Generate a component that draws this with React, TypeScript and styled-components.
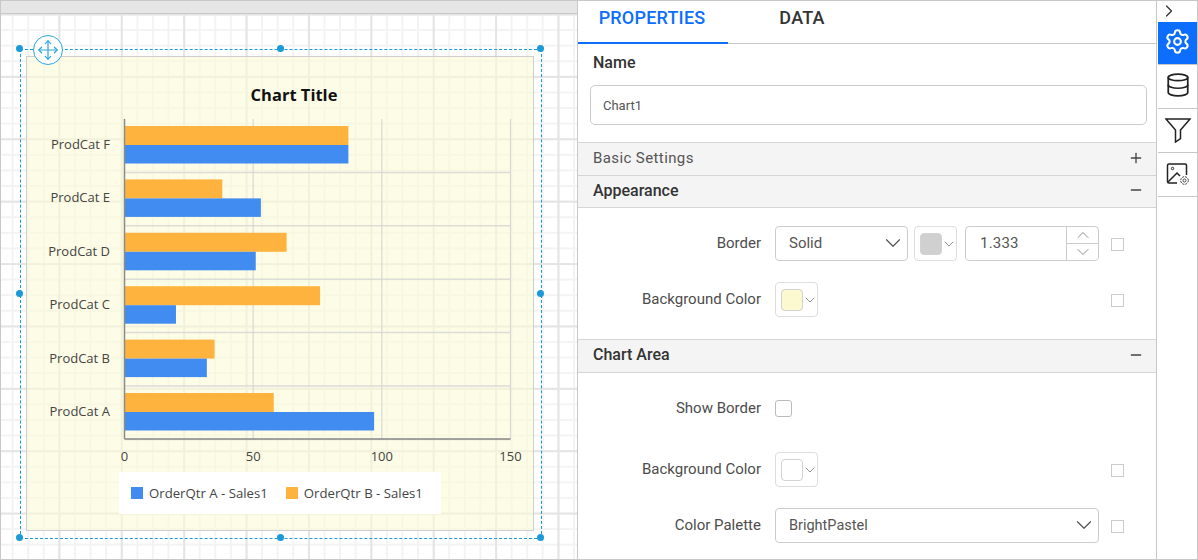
import { createGlobalStyle } from "styled-components";
import styled from "styled-components";
import { ChevronDown, ChevronRight, ChevronUp, Database, Minus, Move, Plus, Settings } from "lucide-react";

const GlobalStyle = createGlobalStyle`
  html, body {
    margin: 0;
    padding: 0;
    background: #fff;
    overflow: hidden;
  }
  * {
    box-sizing: border-box;
  }
`;

const Page = styled.div`
  width: 1198px;
  height: 560px;
  display: flex;
  border: 1px solid #c8c8c8;
  font-family: Roboto, "Liberation Sans", sans-serif;
  color: #333;
  overflow: hidden;
`;

const Designer = styled.div`
  width: 577px;
  flex: none;
  display: flex;
  flex-direction: column;
  border-right: 1px solid #c8c8c8;
`;

const Ruler = styled.div`
  height: 13px;
  flex: none;
  background: #e6e6e6;
  border-bottom: 1px solid #c8c8c8;
`;

const Canvas = styled.div`
  position: relative;
  flex: 1;
  background-color: #fff;
  background-image:
    linear-gradient(to right, #e4e4e4 2px, transparent 2px),
    linear-gradient(to bottom, #e4e4e4 2px, transparent 2px),
    linear-gradient(to right, #f3f3f3 1.5px, transparent 1.5px),
    linear-gradient(to bottom, #f3f3f3 1.5px, transparent 1.5px);
  background-size: 62.4px 62.4px, 62.4px 62.4px, 15.6px 15.6px, 15.6px 15.6px;
  background-position: -5px 0px, 0 -0.5px, -5px 0, 0 -0.5px;
`;

const ChartBox = styled.div`
  position: absolute;
  left: 25px;
  top: 42px;
  width: 508px;
  height: 475px;
  background: rgba(252, 250, 214, 0.6);
  border: 1px solid #cfcfcf;
`;

const ChartSvg = styled.svg`
  position: absolute;
  left: -1px;
  top: -1px;
  width: 508px;
  height: 475px;
  font-family: "Open Sans", "Liberation Sans", sans-serif;
`;

const ChartTitle = styled.text`
  font-size: 16.5px;
  font-weight: 700;
  fill: #111;
  text-anchor: middle;
`;

const AxisLabel = styled.text<{ $anchor: string }>`
  font-size: 13px;
  fill: #444;
  text-anchor: ${(p) => p.$anchor};
`;

const Legend = styled.div`
  position: absolute;
  left: 92px;
  top: 415px;
  width: 322px;
  height: 42px;
  background: #fff;
  display: flex;
  align-items: center;
  padding-left: 12px;
  gap: 18px;
  font-family: "Open Sans", "Liberation Sans", sans-serif;
  font-size: 13.2px;
  color: #444;
`;

const LegendItem = styled.span`
  display: flex;
  align-items: center;
  gap: 6px;
  white-space: nowrap;
`;

const LegendSwatch = styled.i<{ $color: string }>`
  width: 12px;
  height: 12px;
  background: ${(p) => p.$color};
`;

const Selection = styled.div`
  position: absolute;
  left: 18.5px;
  top: 34.5px;
  width: 522px;
  height: 490px;
  border: 1px dashed #1a9ad6;
`;

const Handle = styled.span<{ $x: string; $y: string }>`
  position: absolute;
  left: ${(p) => p.$x};
  top: ${(p) => p.$y};
  width: 7px;
  height: 7px;
  margin: -3.5px 0 0 -3.5px;
  border-radius: 50%;
  background: #1a9ad6;
`;

const MoveGrip = styled.div`
  position: absolute;
  left: 32px;
  top: 21px;
  width: 30px;
  height: 30px;
  border-radius: 50%;
  background: #fff;
  border: 1px solid #2ba5dd;
  color: #2ba5dd;
  display: flex;
  align-items: center;
  justify-content: center;
`;

const Panel = styled.div`
  flex: 1;
  min-width: 0;
  display: flex;
  flex-direction: column;
`;

const Tabs = styled.div`
  height: 43px;
  flex: none;
  display: flex;
  border-bottom: 1px solid #c8c8c8;
`;

const Tab = styled.div<{ $active?: boolean }>`
  width: 150px;
  height: 43px;
  padding: 7px 2px 0 0;
  text-align: center;
  font-size: 18px;
  font-weight: 500;
  letter-spacing: 0.2px;
  line-height: 20px;
  color: ${(p) => (p.$active ? "#0d6efd" : "#333")};
  border-bottom: 2px solid ${(p) => (p.$active ? "#0d6efd" : "transparent")};
`;

const NameSection = styled.div`
  height: 98px;
  flex: none;
  padding: 10px 9px 0 12px;
`;

const NameLabel = styled.div`
  padding-left: 3px;
  font-size: 16px;
  font-weight: 500;
  line-height: 18px;
  color: #333;
`;

const NameInput = styled.div`
  margin-top: 13px;
  height: 40px;
  display: flex;
  align-items: center;
  padding-left: 12px;
  border: 1px solid #ccc;
  border-radius: 5px;
  font-size: 13px;
  color: #555;
`;

const SectionHeader = styled.div<{ $open?: boolean; $h: number }>`
  height: ${(p) => p.$h}px;
  flex: none;
  display: flex;
  align-items: center;
  justify-content: space-between;
  padding: 0 12px 3px 15px;
  background: #f4f4f4;
  border-top: 1px solid #d6d6d6;
  border-bottom: ${(p) => (p.$open ? "1px solid #d6d6d6" : "none")};
  font-size: ${(p) => (p.$open ? 16 : 15)}px;
  font-weight: ${(p) => (p.$open ? 500 : 400)};
  letter-spacing: ${(p) => (p.$open ? "0" : "0.4px")};
  color: ${(p) => (p.$open ? "#333" : "#555")};
`;

const SectionBody = styled.div<{ $h: number; $pt: number }>`
  height: ${(p) => p.$h}px;
  flex: none;
  padding-top: ${(p) => p.$pt}px;
  display: flex;
  flex-direction: column;
`;

const Row = styled.div<{ $gap?: number }>`
  display: grid;
  grid-template-columns: 183px 324px 20px;
  column-gap: 14px;
  align-items: center;
  height: 35px;
  margin-bottom: ${(p) => p.$gap ?? 0}px;
`;

const RowLabel = styled.div`
  text-align: right;
  font-size: 15px;
  line-height: 35px;
  color: #4c4c4c;
  white-space: nowrap;
`;

const Controls = styled.div<{ $center?: boolean }>`
  display: flex;
  gap: 6px;
  height: 35px;
  align-items: ${(p) => (p.$center ? "center" : "stretch")};
`;

const Select = styled.div<{ $w: number; $size: number }>`
  width: ${(p) => p.$w}px;
  height: 35px;
  display: flex;
  align-items: center;
  justify-content: space-between;
  padding: 0 1px 1px 13px;
  border: 1px solid #ccc;
  border-radius: 4px;
  font-size: ${(p) => p.$size}px;
  color: #555;
`;

const ColorPicker = styled.div`
  width: 43px;
  height: 35px;
  display: flex;
  align-items: center;
  padding-left: 5px;
  border: 1px solid #ddd;
  border-radius: 4px;
  color: #777;
  svg {
    flex: none;
    margin-left: -1px;
  }
`;

const ColorSwatch = styled.i<{ $color: string }>`
  width: 22px;
  height: 22px;
  flex: none;
  border-radius: 4px;
  background: ${(p) => p.$color};
  border: 1px solid #d2d2d2;
`;

const Spinner = styled.div`
  width: 134px;
  height: 35px;
  margin-left: 2px;
  display: flex;
  border: 1px solid #ccc;
  border-radius: 4px;
`;

const SpinnerValue = styled.div`
  flex: 1;
  display: flex;
  align-items: center;
  padding: 0 0 1px 14px;
  font-size: 15px;
  letter-spacing: 0.2px;
  color: #555;
`;

const SpinnerButtons = styled.div`
  width: 32px;
  display: flex;
  flex-direction: column;
  border-left: 1px solid #ccc;
  color: #777;
`;

const SpinnerButton = styled.div`
  flex: 1;
  min-height: 0;
  display: flex;
  align-items: center;
  justify-content: center;
  svg {
    flex: none;
  }
  & + & {
    border-top: 1px solid #ccc;
  }
`;

const Check = styled.span<{ $dark?: boolean }>`
  width: ${(p) => (p.$dark ? 17 : 13)}px;
  height: ${(p) => (p.$dark ? 17 : 13)}px;
  border: 1px solid ${(p) => (p.$dark ? "#bbb" : "#ccc")};
  border-radius: ${(p) => (p.$dark ? 3 : 0)}px;
  background: #fff;
  margin-top: ${(p) => (p.$dark ? 0 : 2)}px;
  margin-left: ${(p) => (p.$dark ? 0 : -2)}px;
`;

const Rail = styled.div`
  width: 41px;
  flex: none;
  border-left: 1px solid #c8c8c8;
  display: flex;
  flex-direction: column;
`;

const RailToggle = styled.div`
  height: 21px;
  display: flex;
  align-items: center;
  justify-content: center;
  color: #333;
  padding: 0 17px 2px 0;
`;

const RailItem = styled.div<{ $active?: boolean; $lift?: number }>`
  margin-left: 1px;
  display: flex;
  align-items: center;
  justify-content: center;
  padding-bottom: ${(p) => p.$lift ?? 0}px;
  color: ${(p) => (p.$active ? "#fff" : "#222")};
  background: ${(p) => (p.$active ? "#0d6efd" : "transparent")};
  border-bottom: 1px solid #c8c8c8;
  height: ${(p) => (p.$active ? 43 : 44)}px;
`;

const categories = [
  { name: "ProdCat F", a: 87, b: 87 },
  { name: "ProdCat E", a: 53, b: 38 },
  { name: "ProdCat D", a: 51, b: 63 },
  { name: "ProdCat C", a: 20, b: 76 },
  { name: "ProdCat B", a: 32, b: 35 },
  { name: "ProdCat A", a: 97, b: 58 },
];

// chart drawing is in the chart box's own coordinates
const X0 = 98.5;
const X_SCALE = 386 / 150;
const PLOT_TOP = 63;
const ROW = 53.4;

function BarChart() {
  return (
    <ChartSvg viewBox="0 0 508 475">
      <ChartTitle x={268} y={45}>Chart Title</ChartTitle>
      {[1, 2, 3, 4, 5, 6].map((i) => (
        <line key={i} x1={X0} x2={X0 + 386} y1={PLOT_TOP + i * ROW} y2={PLOT_TOP + i * ROW} stroke="#dcdcd8" strokeWidth="1.5" />
      ))}
      {[50, 100, 150].map((v) => (
        <line key={v} x1={X0 + v * X_SCALE} x2={X0 + v * X_SCALE} y1={PLOT_TOP} y2={PLOT_TOP + 320} stroke="#d8d8d6" strokeWidth="1.2" />
      ))}
      {categories.map((c, i) => {
        const y = PLOT_TOP + i * ROW + 7;
        return (
          <g key={c.name}>
            <rect x={X0} y={y} width={c.b * X_SCALE} height={19} fill="#feb33f" />
            <rect x={X0} y={y + 19} width={c.a * X_SCALE} height={18.5} fill="#418cf0" />
            <AxisLabel $anchor="end" x={84} y={y + 23}>{c.name}</AxisLabel>
          </g>
        );
      })}
      <line x1={X0} x2={X0} y1={PLOT_TOP} y2={PLOT_TOP + 320} stroke="#8a8a86" strokeWidth="1.5" />
      <line x1={X0} x2={X0 + 386} y1={PLOT_TOP + 320} y2={PLOT_TOP + 320} stroke="#8a8a86" strokeWidth="1.5" />
      {[0, 50, 100, 150].map((v) => (
        <AxisLabel key={v} $anchor="middle" x={X0 + v * X_SCALE} y={405}>{v}</AxisLabel>
      ))}
    </ChartSvg>
  );
}

function FilterIcon() {
  return (
    <svg width="26" height="26" viewBox="0 1 26 26" fill="none" stroke="currentColor" strokeWidth="1.5" strokeLinejoin="miter">
      <path d="M1 3h24L15.5 14v8.5L10.5 26V14z" />
    </svg>
  );
}

function ImageSettingsIcon() {
  return (
    <svg width="24" height="24" viewBox="0 3 24 24" fill="none" stroke="currentColor" strokeWidth="1.5">
      <path d="M11 21H3a1.5 1.5 0 0 1-1.5-1.5v-16A1.5 1.5 0 0 1 3 2h16a1.5 1.5 0 0 1 1.5 1.5V13" transform="translate(0 2)" />
      <circle cx="6.5" cy="8.5" r="1.2" strokeWidth="1" />
      <path d="M2 22l9-9 3 3" />
      <circle cx="18.5" cy="20.5" r="1.5" strokeWidth="0.8" />
      <circle cx="18.5" cy="20.5" r="3.8" strokeWidth="0.9" strokeDasharray="2 1" />
    </svg>
  );
}

function App() {
  return (
    <Page>
      <GlobalStyle />
      <Designer>
        <Ruler />
        <Canvas>
          <ChartBox>
            <BarChart />
            <Legend>
              <LegendItem>
                <LegendSwatch $color="#418cf0" />
                OrderQtr A - Sales1
              </LegendItem>
              <LegendItem>
                <LegendSwatch $color="#feb33f" />
                OrderQtr B - Sales1
              </LegendItem>
            </Legend>
          </ChartBox>
          <Selection>
            <Handle $x="-1px" $y="-1px" />
            <Handle $x="50%" $y="-1px" />
            <Handle $x="100%" $y="-1px" />
            <Handle $x="-1px" $y="50%" />
            <Handle $x="100%" $y="50%" />
            <Handle $x="-1px" $y="100%" />
            <Handle $x="50%" $y="100%" />
            <Handle $x="100%" $y="100%" />
          </Selection>
          <MoveGrip>
            <Move size={22} strokeWidth={1.3} />
          </MoveGrip>
        </Canvas>
      </Designer>
      <Panel>
        <Tabs>
          <Tab $active>PROPERTIES</Tab>
          <Tab>DATA</Tab>
        </Tabs>
        <NameSection>
          <NameLabel>Name</NameLabel>
          <NameInput>Chart1</NameInput>
        </NameSection>
        <SectionHeader $h={33}>
          Basic Settings
          <Plus size={16} color="#444" />
        </SectionHeader>
        <SectionHeader $open $h={33}>
          Appearance
          <Minus size={16} color="#444" />
        </SectionHeader>
        <SectionBody $h={131} $pt={18}>
          <Row $gap={21}>
            <RowLabel>Border</RowLabel>
            <Controls>
              <Select $w={133} $size={15}>
                Solid
                <ChevronDown size={26} strokeWidth={1.1} />
              </Select>
              <ColorPicker>
                <ColorSwatch $color="#d0d0d0" />
                <ChevronDown size={16} strokeWidth={1.2} />
              </ColorPicker>
              <Spinner>
                <SpinnerValue>1.333</SpinnerValue>
                <SpinnerButtons>
                  <SpinnerButton>
                    <ChevronUp size={20} strokeWidth={1} />
                  </SpinnerButton>
                  <SpinnerButton>
                    <ChevronDown size={20} strokeWidth={1} />
                  </SpinnerButton>
                </SpinnerButtons>
              </Spinner>
            </Controls>
            <Check />
          </Row>
          <Row>
            <RowLabel>Background Color</RowLabel>
            <Controls>
              <ColorPicker>
                <ColorSwatch $color="#fcf8d0" />
                <ChevronDown size={16} strokeWidth={1.2} />
              </ColorPicker>
            </Controls>
            <Check />
          </Row>
        </SectionBody>
        <SectionHeader $open $h={34}>
          Chart Area
          <Minus size={16} color="#444" />
        </SectionHeader>
        <SectionBody $h={186} $pt={18}>
          <Row $gap={26}>
            <RowLabel>Show Border</RowLabel>
            <Controls $center>
              <Check $dark />
            </Controls>
            <span />
          </Row>
          <Row $gap={21}>
            <RowLabel>Background Color</RowLabel>
            <Controls>
              <ColorPicker>
                <ColorSwatch $color="#fff" />
                <ChevronDown size={16} strokeWidth={1.2} />
              </ColorPicker>
            </Controls>
            <Check />
          </Row>
          <Row>
            <RowLabel>Color Palette</RowLabel>
            <Controls>
              <Select $w={324} $size={14.5}>
                BrightPastel
                <ChevronDown size={26} strokeWidth={1.1} />
              </Select>
            </Controls>
            <Check />
          </Row>
        </SectionBody>
      </Panel>
      <Rail>
        <RailToggle>
          <ChevronRight size={20} strokeWidth={1.5} />
        </RailToggle>
        <RailItem $active $lift={3}>
          <Settings size={27} strokeWidth={1.8} />
        </RailItem>
        <RailItem $lift={3}>
          <Database size={26} strokeWidth={1.6} />
        </RailItem>
        <RailItem $lift={2}>
          <FilterIcon />
        </RailItem>
        <RailItem>
          <ImageSettingsIcon />
        </RailItem>
      </Rail>
    </Page>
  );
}

export default App;
